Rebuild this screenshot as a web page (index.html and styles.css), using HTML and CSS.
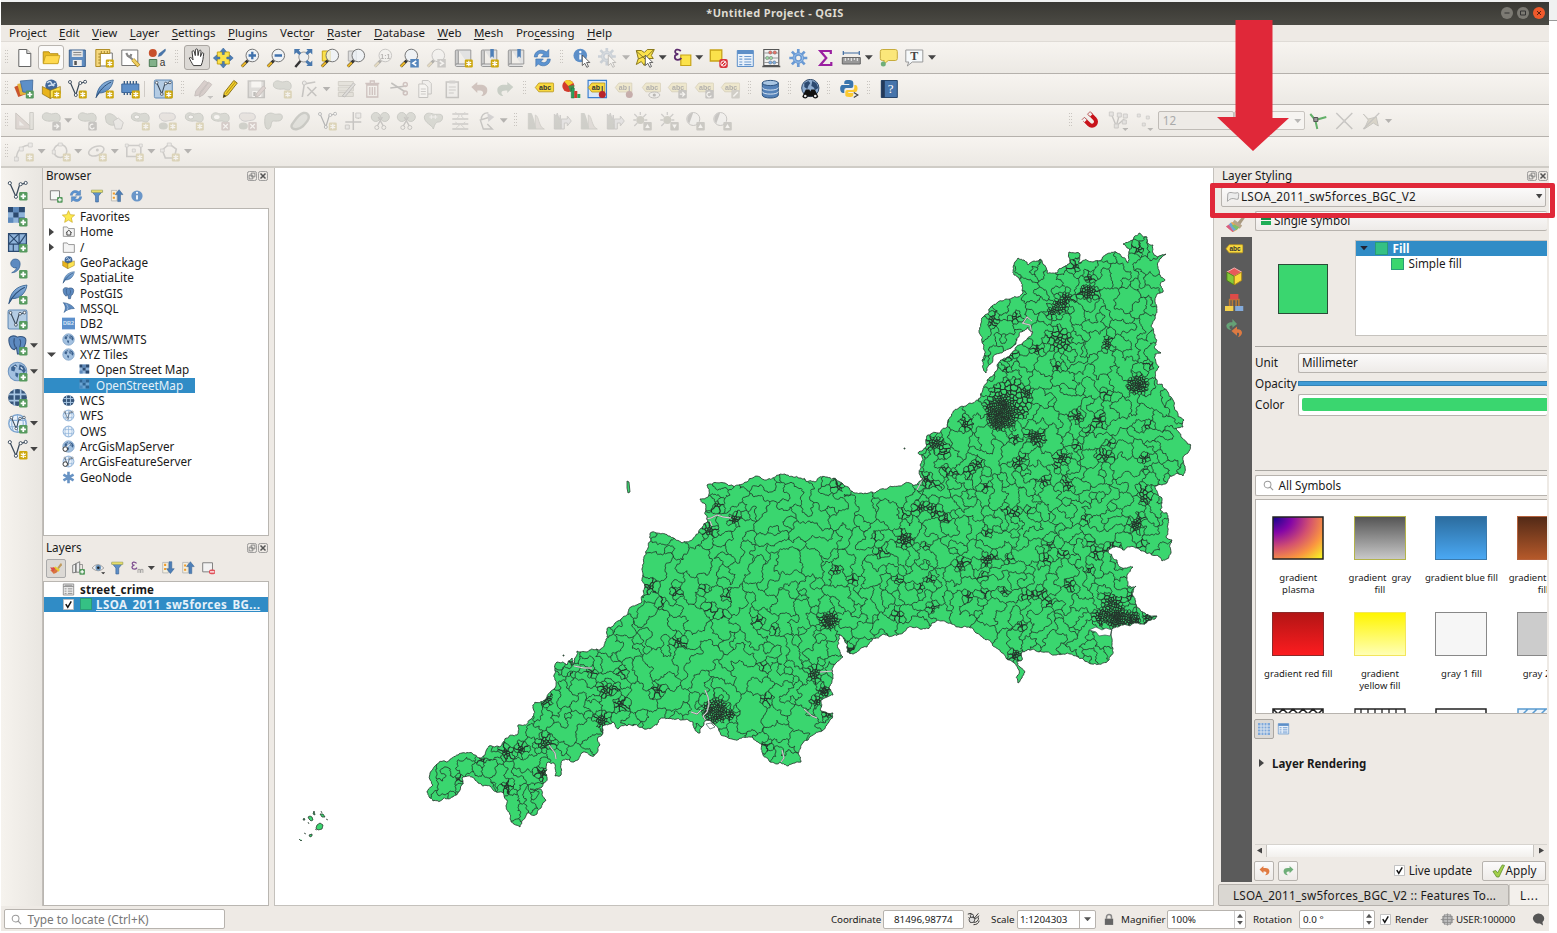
FILE: index.html
```html
<!DOCTYPE html>
<html lang="en">
<head>
<meta charset="utf-8">
<title>*Untitled Project - QGIS</title>
<link rel="stylesheet" href="styles.css">
</head>
<body>
<svg class="grads" width="0" height="0">
<linearGradient id="gb" x1="0" y1="0" x2="0" y2="1"><stop offset="0" stop-color="#8fb5dd"/><stop offset="1" stop-color="#4a7db8"/></linearGradient>
<radialGradient id="plasma" cx="0" cy="0" r="1.35"><stop offset="0" stop-color="#12058c"/><stop offset=".28" stop-color="#8405a7"/><stop offset=".55" stop-color="#d3516f"/><stop offset=".78" stop-color="#fa9540"/><stop offset="1" stop-color="#f6ee26"/></radialGradient>
</svg>
<svg class="defs" width="0" height="0">
<symbol id="star" viewBox="0 0 20 20"><rect x="11.500" y="11.500" width="8" height="8" rx="1.200" fill="#cda70d"/><path d="M15.500 12.800v5.400M13.100 14.100l4.800 2.800M17.900 14.100l-4.800 2.800" stroke="#fff" stroke-width="1.200"/></symbol>
<symbol id="plus" viewBox="0 0 20 20"><rect x="11.500" y="11.500" width="8" height="8" rx="1.200" fill="#569a5e"/><path d="M15.500 13v5M13 15.500h5" stroke="#fff" stroke-width="1.700"/></symbol>
<symbol id="new" viewBox="0 0 20 20"><path d="M4.500 1.500h8l4 4v13h-12z" fill="#fff" stroke="#666"/><path d="M12.500 1.500v4h4" fill="#ddd" stroke="#666"/></symbol>
<symbol id="open" viewBox="0 0 20 20"><path d="M1.500 16V4h6l1.500 2h8v10z" fill="#e8b923" stroke="#b58c14"/><path d="M1.500 16.500L4 8h15l-2 8.500z" fill="#ffd94e" stroke="#c09a1c" stroke-width=".8"/></symbol>
<symbol id="save" viewBox="0 0 20 20"><path d="M2 2h16v16.500H2z" fill="#5f8cc0" stroke="#3b5f8c"/><path d="M4.500 2.500h11v6.500h-11z" fill="#e6e6e6"/><path d="M6 4.500h8M6 6.800h8" stroke="#888"/><path d="M5.500 12h9v6h-9z" fill="#eee"/><path d="M7 13h2.500v4H7z" fill="#555"/></symbol>
<symbol id="layout" viewBox="0 0 20 20"><path d="M5 5h13v13H5z" fill="#fff" stroke="#777"/><path d="M1.500 1.500h14v4H6v13H1.500z" fill="#f5d77c" stroke="#a98418" stroke-width=".9"/><path d="M4 6h2M4 9h2M4 12h2M4 15h2M7 3v2M10 3v2M13 3v2" stroke="#907018" stroke-width=".8"/><use href="#star"/></symbol>
<symbol id="manager" viewBox="0 0 20 20"><path d="M1.500 2h16v15.500h-16z" fill="#fff" stroke="#777"/><path d="M6 5l1.500 3L10 9l1-3" fill="none" stroke="#888" stroke-width="2.200"/><path d="M8 8l5 4" stroke="#888" stroke-width="2.200"/><path d="M12.500 11.500l6 6.500" stroke="#a98418" stroke-width="4"/><path d="M12.500 11.500l5.700 6.200" stroke="#f0cf62" stroke-width="2.600"/></symbol>
<symbol id="stylem" viewBox="0 0 20 20"><circle cx="5.500" cy="5" r="4" fill="#c8512c"/><path d="M18 1l-6 4.500-1 3 3-1L18 3z" fill="#4876ad" stroke="#35608f" stroke-width=".5"/><path d="M2 11.500h7.500v7H2z" fill="#82b18a" stroke="#4d7a55"/><text x="12.500" y="18" font-family="Liberation Sans" font-size="10" fill="#333">a</text></symbol>
<symbol id="hand" viewBox="0 0 20 20"><path d="M6 18.500c-2-3-3.500-6-4.500-8 1.500-1.300 3 .5 4 2L4.500 4c.5-1.700 2-1.500 2.400 0l1 4L8 2c.6-1.500 2-1.400 2.400 0l.4 6 1-5c.8-1.300 2-1 2.100.4L13.400 9l1.400-3.500c1-1 2-.4 1.900.8-.5 3.500-.7 8-2.700 12.200z" fill="#fff" stroke="#333"/></symbol>
<symbol id="pansel" viewBox="0 0 20 20"><path d="M4 4h12v12H4z" fill="#fbe24b" stroke="#c7a418"/><path d="M10 0l3 3.500h-2v3H9v-3H7zM10 20l3-3.500h-2v-3H9v3H7zM0 10l3.500-3v2h3v2h-3v2zM20 10l-3.500-3v2h-3v2h3v2z" fill="#4d7fb8" stroke="#305c8e" stroke-width=".5"/></symbol>
<symbol id="lens" viewBox="0 0 20 20"><path d="M1.500 18.500l6-6" stroke="#333" stroke-width="3"/><path d="M1.500 18.500l4-4" stroke="#e8b528" stroke-width="2.300"/><circle cx="12" cy="7.500" r="6.300" fill="#eef3f8" fill-opacity=".75" stroke="#777"/></symbol>
<symbol id="zin" viewBox="0 0 20 20"><use href="#lens"/><path d="M12 3.800v7.400M8.300 7.500h7.400" stroke="#3f71ac" stroke-width="2.300"/></symbol>
<symbol id="zout" viewBox="0 0 20 20"><use href="#lens"/><path d="M8.300 7.500h7.400" stroke="#3f71ac" stroke-width="2.300"/></symbol>
<symbol id="zfull" viewBox="0 0 20 20"><path d="M2 19l6-7" stroke="#333" stroke-width="2.400"/><circle cx="10.500" cy="9" r="5" fill="#eee" stroke="#999"/><path d="M1 1h6L5.500 2.500l2.500 2.500-2 2-3-2.500L1 6.500zM19 1h-6l1.500 1.500L12 5l2 2 3-2.500 2 2zM19 18h-6l1.500-1.500L12 14l2-2 3 2.500 2-2z" fill="#4978ad"/></symbol>
<symbol id="zsel" viewBox="0 0 20 20"><path d="M2 3h8v10H2z" fill="#fbe24b" stroke="#c7a418"/><use href="#lens"/></symbol>
<symbol id="zlay" viewBox="0 0 20 20"><path d="M2 3h8v10H2z" fill="#ddd" stroke="#aaa"/><use href="#lens"/></symbol>
<symbol id="znat" viewBox="0 0 20 20"><use href="#lens"/><text x="7" y="10.500" font-family="Liberation Sans" font-weight="bold" font-size="7" fill="#444">1:1</text></symbol>
<symbol id="zlast" viewBox="0 0 20 20"><use href="#lens"/><path d="M11 11h8.500v8.500H11z" fill="#5585bb"/><path d="M17 13l-3.500 2.200L17 17.500" fill="none" stroke="#fff" stroke-width="1.500"/></symbol>
<symbol id="znext" viewBox="0 0 20 20"><use href="#lens"/><path d="M11 11h8.500v8.500H11z" fill="#888"/><path d="M13.500 13l3.500 2.200-3.500 2.300" fill="none" stroke="#fff" stroke-width="1.500"/></symbol>
<symbol id="book" viewBox="0 0 20 20"><path d="M2 3q0-1 1.500-1H5v14q-3-.5-3 1z" fill="#ccc" stroke="#999"/><path d="M5 2h12.500v14H4q-2 0-2 1.200t1.500 1.300h13" fill="#e2e2e2" stroke="#999"/></symbol>
<symbol id="bookn" viewBox="0 0 20 20"><use href="#book"/><use href="#star"/></symbol>
<symbol id="bookm" viewBox="0 0 20 20"><use href="#book"/><path d="M11 1h3.500v9l-1.700-1.700L11 10z" fill="#4d7fb8"/></symbol>
<symbol id="bookmn" viewBox="0 0 20 20"><use href="#bookm"/><use href="#star"/></symbol>
<symbol id="refresh" viewBox="0 0 20 20"><path d="M2 9C2 3 9 0 14 4l2.500-2.500V9H9l2.500-2.500C8 4 5 6 5 9zM18 11c0 6-7 9-12 5l-2.500 2.500V11H11l-2.500 2.500c3.500 2.500 6.500.5 6.500-2.500z" fill="#5d94d1" stroke="#3d6fa8" stroke-width=".6"/></symbol>
<symbol id="cursor" viewBox="0 0 20 20"><path d="M10 7v10.500l2.500-2.200 2 4 1.700-.8-1.900-4h3.200z" fill="#fff" stroke="#444" stroke-width=".8"/></symbol>
<symbol id="info" viewBox="0 0 20 20"><circle cx="8" cy="7.500" r="6.800" fill="#5d8fc8"/><path d="M8 6.500v5" stroke="#fff" stroke-width="2"/><circle cx="8" cy="4" r="1.200" fill="#fff"/><use href="#cursor"/></symbol>
<symbol id="gear" viewBox="0 0 20 20"><path d="M10 1v18M1 10h18M3.600 3.600l12.800 12.800M16.400 3.600L3.600 16.400" stroke="#6a9ad4" stroke-width="2.700"/><circle cx="10" cy="10" r="5.800" fill="#6a9ad4"/><circle cx="10" cy="10" r="4.300" fill="none" stroke="#9cc0e8"/><circle cx="10" cy="10" r="2.200" fill="#f3f0ec"/></symbol>
<symbol id="gearc" viewBox="0 0 20 20"><g transform="translate(-1.500 -1.500)"><use href="#gear"/></g><use href="#cursor"/></symbol>
<symbol id="sel" viewBox="0 0 20 20"><path d="M1 2.500h5l3 2 3-3h7l-3 6 2 3-6 0-3 7-3-4-5 3 2-6z" fill="#fbe24b" stroke="#8b7a1c"/><path d="M1 3l11 10M18 2l-9 9M3 11l7-3" stroke="#6b5f1c" stroke-width=".8"/><use href="#cursor"/></symbol>
<symbol id="eps" viewBox="0 0 20 20"><path d="M8.500 7h10v10.500h-10z" fill="#fbe24b" stroke="#c7a418" stroke-width="1.200"/><path d="M8.500 3C6 .5 2 1.500 3 4.500 3.500 6 6 6 6 6S2 6.500 2.500 9.500C3 12.500 7.500 12.500 9 10" fill="none" stroke="#5c2b6e" stroke-width="1.800"/></symbol>
<symbol id="desel" viewBox="0 0 20 20"><path d="M2 2h11.500v11H2z" fill="#fbe24b" stroke="#c7a418" stroke-width="1.300"/><rect x="11" y="11" width="8.500" height="9" rx="2" fill="#d9363e"/><circle cx="15.200" cy="15.500" r="2.600" fill="none" stroke="#fff"/><path d="M13.500 17.300l3.500-3.700" stroke="#fff"/></symbol>
<symbol id="table" viewBox="0 0 20 20"><path d="M2 2.500h16v16H2z" fill="#e9f1fa" stroke="#5d8fc8"/><path d="M2 2.500h16v3.500H2z" fill="#5d8fc8"/><path d="M4 8.500h3M9 8.500h7M4 11.200h3M9 11.200h7M4 14h3M9 14h7M4 16.600h3M9 16.600h7" stroke="#6d9bd0" stroke-width="1.200"/></symbol>
<symbol id="abacus" viewBox="0 0 20 20"><path d="M2.500 1.500h15v16h-15z" fill="#f2f2f2" stroke="#555" stroke-width="1.100"/><path d="M1 18.500h18" stroke="#555" stroke-width="1.300"/><path d="M3 5h14M3 10h14M3 14.500h14" stroke="#777" stroke-width=".7"/><g stroke="#666" stroke-width=".4"><circle cx="9" cy="4.500" r="1.700" fill="#e87468"/><circle cx="13.500" cy="4.500" r="1.700" fill="#e87468"/><circle cx="6" cy="10" r="1.700" fill="#9ad6a2"/><circle cx="9.700" cy="10" r="1.700" fill="#9ad6a2"/><circle cx="9" cy="14.500" r="1.700" fill="#7eade0"/><circle cx="13" cy="14.500" r="1.700" fill="#7eade0"/></g></symbol>
<symbol id="sigma" viewBox="0 0 20 20"><path d="M15.500 6V3H5l6 7-6 7h11V14" fill="none" stroke="#9a1fa0" stroke-width="2.200"/></symbol>
<symbol id="ruler" viewBox="0 0 20 20"><path d="M2 5h16M2 3v4M18 3v4" stroke="#3f6ba0" stroke-width="1.200"/><path d="M1 9.500h18v6.500H1z" fill="#999" stroke="#666"/><path d="M4 10v3M7 10v2M10 10v3M13 10v2M16 10v3" stroke="#eee"/></symbol>
<symbol id="tip" viewBox="0 0 20 20"><path d="M4 1.500h13q2 0 2 2v7q0 2-2 2h-7l-5 4 1-4H4q-2 0-2-2v-7q0-2 2-2z" fill="#fbe77a" stroke="#c7ac3c"/><circle cx="5" cy="16" r="2.500" fill="#6fae79"/></symbol>
<symbol id="textann" viewBox="0 0 20 20"><path d="M1.500 2h17v12H8l-5 4 1.500-4h-3z" fill="#f6f9fb" stroke="#999"/><text x="6" y="12" font-family="Liberation Serif" font-weight="bold" font-size="12" fill="#444">T</text></symbol>
<symbol id="addl" viewBox="0 0 20 20"><path d="M0 8l9-4 3 11-8 3z" fill="#c9542c"/><path d="M3 5l10-2 1 12-8 1z" fill="#e4b43a"/><path d="M6 2l12.500-1-.5 13-9.500-1z" fill="#5d8fc8" stroke="#3d6799" stroke-width=".8"/><use href="#plus"/></symbol>
<symbol id="gpkg" viewBox="0 0 20 20"><circle cx="10" cy="6.500" r="6" fill="#41689b"/><path d="M6 4q3-3 4 0t4 0M7 7q4-2 6 0" stroke="#cfe0f0" fill="none" stroke-width="1.500"/><path d="M1 7.500l8 4v8l-8-4.500z" fill="#e8b31c" stroke="#8e6f10" stroke-width=".7"/><path d="M9 11.500l10-4v7l-10 5z" fill="#fde453" stroke="#8e6f10" stroke-width=".7"/></symbol>
<symbol id="gpkgn" viewBox="0 0 20 20"><use href="#gpkg"/><use href="#star"/></symbol>
<symbol id="vect" viewBox="0 0 20 20"><path d="M3 3.500l5.500 12.500L12 4.500 18 3" fill="none" stroke="#3b4a5a" stroke-width="1.200"/><g fill="#fff" stroke="#3b4a5a" stroke-width=".9"><circle cx="2.700" cy="3" r="1.500"/><circle cx="8.500" cy="16" r="1.500"/><circle cx="13" cy="4" r="1.500"/><circle cx="17.800" cy="2.800" r="1.500"/></g></symbol>
<symbol id="vectn" viewBox="0 0 20 20"><use href="#vect"/><use href="#star"/></symbol>
<symbol id="vectp" viewBox="0 0 20 20"><use href="#vect"/><use href="#plus"/></symbol>
<symbol id="feather" viewBox="0 0 20 20"><path d="M2 18C3 9 8 2 19 1c-1 8-7 13-14 13z" fill="url(#gb)" stroke="#35608f" stroke-width=".8"/><path d="M1.500 19C5 12 10 6 17 3" fill="none" stroke="#2d4f77"/></symbol>
<symbol id="feathern" viewBox="0 0 20 20"><use href="#feather"/><use href="#star"/></symbol>
<symbol id="featherp" viewBox="0 0 20 20"><use href="#feather"/><use href="#plus"/></symbol>
<symbol id="chip" viewBox="0 0 20 20"><path d="M4 2v14M7 2v14M10 2v14M13 2v14M16 2v14" stroke="#31577f" stroke-width="1.300"/><path d="M1.500 5h17v8.500h-17z" fill="#5d8fc8" stroke="#3d6799"/><use href="#star"/></symbol>
<symbol id="virt" viewBox="0 0 20 20"><rect x="1" y="1" width="18" height="18" rx="1.500" fill="#b4cce4" stroke="#6089b5"/><g transform="translate(1 1) scale(.88)"><use href="#vect"/></g></symbol>
<symbol id="virtn" viewBox="0 0 20 20"><use href="#virt"/><use href="#star"/></symbol>
<symbol id="virtp" viewBox="0 0 20 20"><use href="#virt"/><use href="#plus"/></symbol>
<symbol id="pencil" viewBox="0 0 20 20"><path d="M4 18.500l1-5L14.500 1.500l3.500 2.500L8.500 16z" fill="#f3d02d" stroke="#8c7420"/><path d="M6.800 14.800L16 3" stroke="#b39010" fill="none"/><path d="M4 18.500l.6-3 2.300 1.500z" fill="#333"/></symbol>
<symbol id="pencils" viewBox="0 0 20 20"><path d="M1.500 17l1-5L11 1.500l4 2.500-9 12zM6 18l1-5 8-10 3.500 2.500-8 10z" fill="#b88" stroke="#866"/><path d="M14 17h6l-3 3z" fill="#777"/></symbol>
<symbol id="savep" viewBox="0 0 20 20"><path d="M2 2h16v16.500H2z" fill="#bbb" stroke="#777" stroke-width="1.500"/><path d="M5 2.500h10v6H5zM6 12h9v6H6z" fill="#fff"/><path d="M7 13h2.500v4H7z" fill="#666"/><path d="M9 18l1.500-4L17 7l2.500 2-7 8z" fill="#c99" stroke="#866"/></symbol>
<symbol id="poly" viewBox="0 0 20 20"><path d="M1 6C1 2 5 1 8 2.500s5-1 8 0 4 6 1.500 8-4-1-7-.5S1 10 1 6z" fill="#a4b19e" stroke="#7b8876"/></symbol>
<symbol id="polyn" viewBox="0 0 20 20"><use href="#poly"/><use href="#star"/></symbol>
<symbol id="polya" viewBox="0 0 20 20"><use href="#poly"/><rect x="11" y="11" width="8.500" height="8.500" rx="1" fill="#777"/><path d="M12.500 15.200h5M15 13l2.400 2.200L15 17.500" stroke="#fff" fill="none" stroke-width="1.200"/></symbol>
<symbol id="polyr" viewBox="0 0 20 20"><use href="#poly"/><rect x="11" y="11" width="8.500" height="8.500" rx="1" fill="#777"/><path d="M17 16.500a2.300 2.300 0 1 1-1-3" stroke="#fff" fill="none" stroke-width="1.200"/></symbol>
<symbol id="ring" viewBox="0 0 20 20"><use href="#poly"/><ellipse cx="6.500" cy="6" rx="2.800" ry="2" fill="#fff" stroke="#7b8876"/><use href="#star"/></symbol>
<symbol id="polyx" viewBox="0 0 20 20"><use href="#poly"/><ellipse cx="6.500" cy="6" rx="2.800" ry="2" fill="#fff"/><rect x="11" y="11" width="8.500" height="8.500" rx="1" fill="#b88"/><path d="M13 13l4.500 4.500M17.500 13L13 17.500" stroke="#fff" stroke-width="1.200"/></symbol>
<symbol id="poly2" viewBox="0 0 20 20"><path d="M2 5c1-4 4-3 8-3s8 0 8 4-5 3-8 4S2 9 2 5z" fill="#d9c9c4" stroke="#889"/><ellipse cx="6" cy="15" rx="4.500" ry="3.500" fill="#8f9d88"/><use href="#star"/></symbol>
<symbol id="poly2x" viewBox="0 0 20 20"><path d="M2 5c1-4 4-3 8-3s8 0 8 4-5 3-8 4S2 9 2 5z" fill="#d9c9c4" stroke="#889"/><ellipse cx="6" cy="15" rx="4.500" ry="3.500" fill="#8f9d88"/><rect x="11" y="11" width="8.500" height="8.500" rx="1" fill="#b88"/><path d="M13 13l4.500 4.500M17.500 13L13 17.500" stroke="#fff" stroke-width="1.200"/></symbol>
<symbol id="simp" viewBox="0 0 20 20"><path d="M1 6c1-4 5-4 8-2s5 4 3 8-8 2-10-1z" fill="#a4b19e" stroke="#7b8876"/><path d="M9 10l5-3 5 4.500-2 6.500H11z" fill="#ddd" stroke="#888"/></symbol>
<symbol id="resh" viewBox="0 0 20 20"><path d="M2 5c3-4 7-3 9-2s8-2 8 3-6 4-9 4-1 7-5 8-4-9-3-13z" fill="#a4b19e" stroke="#7b8876"/></symbol>
<symbol id="offs" viewBox="0 0 20 20"><path d="M2 13C5 9 8 3 13 2s7 4 4 8-5 7-10 8-7-2-5-5z" fill="#bfc8ba" stroke="#7c8878" stroke-width="2.400"/></symbol>
<symbol id="node" viewBox="0 0 20 20"><path d="M3 18L5 5 16 3M8 8l9 9M17 8l-9 9" stroke="#777" fill="none" stroke-width="1.600"/><circle cx="5" cy="4" r="2" fill="#ddd" stroke="#777"/></symbol>
<symbol id="form" viewBox="0 0 20 20"><path d="M2 2.500h15v4H2zM2 8h15v4H2zM2 13.500h15v4H2z" fill="#cdcab0" stroke="#99967c"/><path d="M6 17L17 4l2 1.500L8.500 18z" fill="#bbb" stroke="#666"/></symbol>
<symbol id="trash" viewBox="0 0 20 20"><path d="M4.500 6h11v12h-11zM3 4.500h14M8 4V2h4v2M7.500 8v8M10 8v8M12.500 8v8" fill="none" stroke="#a66" stroke-width="1.300"/></symbol>
<symbol id="cut" viewBox="0 0 20 20"><path d="M2 4l14 9M1 9l16-2" stroke="#666" stroke-width="1.500"/><circle cx="16" cy="5.500" r="2" fill="none" stroke="#a66" stroke-width="1.500"/><circle cx="16" cy="14" r="2" fill="none" stroke="#a66" stroke-width="1.500"/></symbol>
<symbol id="copy" viewBox="0 0 20 20"><path d="M7 1.500h6l3 3V15H7z" fill="#eee" stroke="#777"/><path d="M3.500 5h6l3 3v10.500h-9z" fill="#fff" stroke="#777"/><path d="M5.500 10h5M5.500 12.500h5M5.500 15h5" stroke="#888"/></symbol>
<symbol id="paste" viewBox="0 0 20 20"><path d="M4 3h12v15.500H4z" fill="#eee" stroke="#777" stroke-width="1.500"/><path d="M7 1.500h6v3H7z" fill="#999"/><path d="M6.500 8h7M6.500 11h7M6.500 14h5" stroke="#888"/></symbol>
<symbol id="undo" viewBox="0 0 20 20"><path d="M2 8l6-5v3c6-1 10 1 10 5s-3 6-6 6c4-4 1-6-4-5.500V14z" fill="#b0695a"/></symbol>
<symbol id="undoo" viewBox="0 0 20 20"><path d="M1 8l7-6v3.500c7-1 11 1 11 6s-4 7-8 7c5-4 2-7-3-6.500V15z" fill="#e07a41"/></symbol>
<symbol id="redo" viewBox="0 0 20 20"><path d="M18 8l-6-5v3C6 5 2 7 2 11s3 6 6 6c-4-4-1-6 4-5.500V14z" fill="#6d9a78"/></symbol>
<symbol id="redog" viewBox="0 0 20 20"><path d="M19 8l-7-6v3.500c-7-1-11 1-11 6s4 7 8 7c-5-4-2-7 3-6.500V15z" fill="#6fae79"/></symbol>
<symbol id="abc" viewBox="0 0 20 20"><path d="M1 8.500L4.500 4h14q.8 0 .8.800v7.200q0 .8-.8.800h-14z" fill="#f8d940" stroke="#b8941a" stroke-width=".8"/><text x="4.800" y="10.800" font-family="Liberation Sans" font-weight="bold" font-size="7" fill="#333">abc</text></symbol>
<symbol id="diag" viewBox="0 0 20 20"><circle cx="7" cy="7" r="6" fill="#d23a2c"/><path d="M7 7L3 2.500A6 6 0 0 1 12 4z" fill="#f3cf2b"/><path d="M7 7l6-1q0 5-4 7z" fill="#44904d"/><path d="M10 9h3v10h-3z" fill="#2ca05a" stroke="#1c6638" stroke-width=".5"/><path d="M13 12h3v7h-3z" fill="#d23a2c"/><path d="M16 15h3v4h-3z" fill="#2ca05a"/></symbol>
<symbol id="pinl" viewBox="0 0 20 20"><path d="M1 8.500L4.500 4h13v9h-13z" fill="#f8d940" stroke="#b8941a" stroke-width=".8"/><text x="4.500" y="11" font-family="Liberation Sans" font-weight="bold" font-size="7" fill="#333">ab</text><path d="M15 7v7" stroke="#555" stroke-width="1.300"/><circle cx="15" cy="15.500" r="3.500" fill="#b8242b"/></symbol>
<symbol id="pinb" viewBox="0 0 20 20"><path d="M.8 1.300h18.400v17.400H.8z" fill="#dbe8f6" stroke="#3b7fd0" stroke-width="1.200"/><use href="#pinl"/></symbol>
<symbol id="eyel" viewBox="0 0 20 20"><use href="#abc"/><ellipse cx="13" cy="16" rx="5.500" ry="3" fill="#eee" stroke="#666"/><circle cx="13" cy="16" r="1.600" fill="#555"/></symbol>
<symbol id="mvl" viewBox="0 0 20 20"><use href="#abc"/><rect x="11" y="11" width="8.500" height="8.500" rx="1" fill="#777"/><path d="M12.500 15.200h5M15 13l2.400 2.200L15 17.500" stroke="#fff" fill="none" stroke-width="1.200"/></symbol>
<symbol id="rtl" viewBox="0 0 20 20"><use href="#abc"/><rect x="11" y="11" width="8.500" height="8.500" rx="1" fill="#777"/><path d="M17 16.500a2.300 2.300 0 1 1-1-3" stroke="#fff" fill="none" stroke-width="1.200"/></symbol>
<symbol id="edl" viewBox="0 0 20 20"><use href="#abc"/><rect x="11" y="11" width="8.500" height="8.500" rx="1" fill="#99967c"/><path d="M13 17.500l4.500-4.500" stroke="#fff" fill="none" stroke-width="1.600"/></symbol>
<symbol id="db" viewBox="0 0 20 20"><path d="M2 4v12c0 4 16 4 16 0V4z" fill="#5582b8" stroke="#2f5580"/><path d="M2 8.500c0 3.500 16 3.500 16 0M2 12.500c0 3.500 16 3.500 16 0" fill="none" stroke="#d6e3f0"/><ellipse cx="10" cy="4" rx="8" ry="2.600" fill="#a9c6e3" stroke="#2f5580"/></symbol>
<symbol id="globe" viewBox="0 0 20 20"><circle cx="10" cy="10" r="8.800" fill="#a3c1e0" stroke="#7096c0"/><path d="M4 6l4-3 2 2-2 2-1 3-3-1zM12 3l4 2 2 4-2 3-2-3-3-1zM8 11l3 1-1 4-2-2z" fill="#3c628f"/><path d="M7 5l2 1M13 6l2 2" stroke="#dde8f3" stroke-width="1.200"/></symbol>
<symbol id="globep" viewBox="0 0 20 20"><use href="#globe"/><use href="#plus"/></symbol>
<symbol id="gfind" viewBox="0 0 20 20"><circle cx="10" cy="9" r="8.600" fill="#8fadd0" stroke="#2f4a6c"/><path d="M4 4l4-2 2 2-2 3-1 3-3-2zM12 2l4 2 2 5-3 2-2-3-2-1z" fill="#2d4a70"/><path d="M5.500 10.500H9l1 2 1-2h3.500l3.500 7c-1 2.500-5 2.500-5.500 0h-5C7 20 3 20 2 17.500z" fill="#111"/><circle cx="5" cy="17" r="1.300" fill="#eee"/><circle cx="15" cy="17" r="1.300" fill="#eee"/></symbol>
<symbol id="py" viewBox="0 0 20 20"><path d="M9 1c-4 0-4 1-4 4h5v1H3c-3 0-3 8 1 8h1v-3q0-2 2-2h5q2 0 2-2V4c0-2-1-3-5-3z" fill="#3a75ad"/><path d="M10 18c4 0 4-1 4-4H9v-1h7c3 0 3-7 0-7h-1v3q0 2-2 2H8q-2 0-2 2v3c0 1 1 2 4 2z" fill="#fbc931"/><path d="M14.500 13.500l4 2.500-4 2.500" fill="none" stroke="#444" stroke-width="1.200"/></symbol>
<symbol id="help" viewBox="0 0 20 20"><path d="M2 1.500h16v17H2z" fill="#4674ab" stroke="#27466c"/><path d="M2 1.500h3.500v17H2z" fill="#23395a"/><text x="8.500" y="14" font-family="Liberation Serif" font-size="13" fill="#fff">?</text></symbol>
<symbol id="cad" viewBox="0 0 20 20"><path d="M1.500 2v16H19z" fill="#c9a9a0" stroke="#876"/><path d="M5 10v4.500h5z" fill="#eee"/><path d="M15.500 1.500h3.500v17h-3.500z" fill="#ccb" stroke="#887"/></symbol>
<symbol id="scis" viewBox="0 0 20 20"><circle cx="5.500" cy="6" r="4.500" fill="#a4b19e" stroke="#7b8876"/><circle cx="14.500" cy="6" r="4.500" fill="#a4b19e" stroke="#7b8876"/><path d="M8 6l5 9M12 6l-5 9" stroke="#777" stroke-width="1.500"/><circle cx="6.500" cy="16.500" r="2" fill="none" stroke="#777"/><circle cx="13.500" cy="16.500" r="2" fill="none" stroke="#777"/></symbol>
<symbol id="mrg" viewBox="0 0 20 20"><path d="M1 6c1-5 6-4 9-3s8-1 9 2-1 6-4 6-4 4-5 7c-1-4-9-6-9-12z" fill="#a4b19e" stroke="#7b8876"/><path d="M6 6h8M8 4v4M12 4v4" stroke="#eee"/></symbol>
<symbol id="merge" viewBox="0 0 20 20"><path d="M2 3h16M2 8h16M2 13h16M2 18h16" stroke="#888" stroke-width="1.500"/><path d="M5 1l4 4-4 4M15 1l-4 4 4 4M5 11l4 3-4 4M15 11l-4 3 4 4" fill="none" stroke="#999"/></symbol>
<symbol id="mergev" viewBox="0 0 20 20"><path d="M10 1v18M2 11h16M15 2v6" stroke="#777" stroke-width="1.500"/><path d="M12.500 2h5v5h-5zM2 14h4v4H2z" fill="#ddd" stroke="#888"/></symbol>
<symbol id="rot" viewBox="0 0 20 20"><path d="M14 6L4 9l3 9h9l-5-5M5 9a6 6 0 0 1 7-7" fill="none" stroke="#777" stroke-width="1.400"/><path d="M11 2l7 4-6 5z" fill="#99a"/></symbol>
<symbol id="hist" viewBox="0 0 20 20"><path d="M2 2v16h16c-6-2-5-13-9-14v14" fill="#c9b9b4" stroke="#998"/><path d="M2 2h3c2 2 4 12 5 16H2z" fill="#8d9788"/></symbol>
<symbol id="histx" viewBox="0 0 20 20"><path d="M2 18V3l2 2 1-3 2 7 1-5 1 14z" fill="#8d9788" stroke="#888"/><path d="M9 8h6V5l4 5-4 5v-3h-3v6H9z" fill="#ccd" stroke="#888"/></symbol>
<symbol id="sun" viewBox="0 0 20 20"><circle cx="8" cy="9" r="4" fill="#8f8f70"/><path d="M8 1v3M1 9h3M2 3l3 3M14 3l-3 3M2 15l3-3M12 9h3" stroke="#888" stroke-width="1.300"/><rect x="11" y="11" width="8.500" height="8.500" rx="1" fill="#88887a"/><path d="M15.200 13l2.300 4h-4.600z" fill="#fff"/></symbol>
<symbol id="sund" viewBox="0 0 20 20"><use href="#sun"/><path d="M12.500 12.500h5.500v5h-5.500z" fill="#88887a"/><path d="M15.200 17.500l2.300-4h-4.600z" fill="#fff"/></symbol>
<symbol id="contr" viewBox="0 0 20 20"><circle cx="8" cy="8" r="6.500" fill="#eee" stroke="#777"/><path d="M8 1.500a6.500 6.500 0 0 0-4 11z" fill="#777"/><rect x="11" y="11" width="8.500" height="8.500" rx="1" fill="#88887a"/><path d="M15.200 13l2.300 4h-4.600z" fill="#fff"/></symbol>
<symbol id="magnet" viewBox="0 0 20 20"><g transform="rotate(-45 10 10)"><path d="M6 4v7a4 4 0 0 0 8 0V4" fill="none" stroke="#c8141c" stroke-width="4"/><path d="M6 3v3M14 3v3" stroke="#eee" stroke-width="3.400"/><path d="M4.200 2.500h3.600v3.500M12.200 6V2.500h3.600V6" fill="none" stroke="#a33" stroke-width=".7"/></g></symbol>
<symbol id="snapv" viewBox="0 0 20 20"><path d="M3 3l5 12 3-11M8 15l8-7" stroke="#777" fill="none" stroke-width="1.400"/><path d="M1 1h4v4H1zM6 13h4v4H6zM9 2h4v4H9zM15 3h4v4h-4zM14 9h4v4h-4z" fill="#ccc" stroke="#888"/><path d="M14 17h6l-3 3z" fill="#555"/></symbol>
<symbol id="dots" viewBox="0 0 20 20"><path d="M3 3h3v3H3zM12 5h3v3h-3zM8 12h3v3H8z" fill="#ccc" stroke="#888" stroke-width=".8"/><path d="M13 17h6l-3 3z" fill="#555"/></symbol>
<symbol id="topo" viewBox="0 0 20 20"><path d="M2 3l5 6 11-3M7 9l2 9" stroke="#63b069" fill="none" stroke-width="2"/><path d="M5.500 6.500h4v4h-4z" fill="#999" stroke="#555"/></symbol>
<symbol id="xx" viewBox="0 0 20 20"><path d="M2 2l16 16M18 2L2 18" stroke="#777" stroke-width="1.500"/><circle cx="10" cy="10" r="1.500" fill="#888"/></symbol>
<symbol id="xs" viewBox="0 0 20 20"><path d="M2 3l5 5 8-2 2 9-5-3-9 6 4-9z" fill="#b5a66c" stroke="#776"/><path d="M18 2L2 18" stroke="#777" stroke-width="1.300"/></symbol>
<symbol id="arcn" viewBox="0 0 20 20"><path d="M2 18C2 9 7 3 17 3" fill="none" stroke="#888" stroke-width="1.600"/><path d="M0 15h4v4H0zM5 5h4v4H5zM14 1h4v4h-4z" fill="#ddd" stroke="#888" stroke-width=".8"/><use href="#star"/></symbol>
<symbol id="circn" viewBox="0 0 20 20"><circle cx="9" cy="9" r="6.500" fill="none" stroke="#888" stroke-width="1.600"/><path d="M7 1h4v3H7zM1 8h3v4H1z" fill="#ddd" stroke="#888" stroke-width=".8"/><use href="#star"/></symbol>
<symbol id="elln" viewBox="0 0 20 20"><ellipse cx="9" cy="9" rx="8" ry="4.500" transform="rotate(-20 9 9)" fill="none" stroke="#888" stroke-width="1.600"/><circle cx="10" cy="8" r="1.500" fill="#888"/><use href="#star"/></symbol>
<symbol id="recn" viewBox="0 0 20 20"><path d="M2.500 3.500h14v11h-14z" fill="none" stroke="#888" stroke-width="1.600"/><path d="M8 7h3v3H8zM1 2h3v3H1zM15 2h3v3h-3z" fill="#ddd" stroke="#888" stroke-width=".8"/><use href="#star"/></symbol>
<symbol id="pentn" viewBox="0 0 20 20"><path d="M9 2l7 5-2 9H5L2 8z" fill="none" stroke="#888" stroke-width="1.600"/><path d="M7 1h4v3H7zM0 7h4v3H0z" fill="#ddd" stroke="#888" stroke-width=".8"/><use href="#star"/></symbol>
<symbol id="raster" viewBox="0 0 20 20"><path d="M1 1h16v15H1z" fill="#8fb3da"/><path d="M1 1h5v5H1zM11 1h6v5h-6zM6 6h5v5H6zM11 11h6v5h-6z" fill="#2c4a70"/><path d="M6 1h5v5H6zM1 11h5v5H1z" fill="#5c88ba"/></symbol>
<symbol id="rasterp" viewBox="0 0 20 20"><use href="#raster"/><use href="#plus"/></symbol>
<symbol id="meshp" viewBox="0 0 20 20"><path d="M1.500 1.500h17v17h-17z" fill="#8fb3da" stroke="#2c4a70" stroke-width="1.200"/><path d="M1.500 1.500l10 10M11.500 1.500l-10 10M11.500 1.500v17M11.500 11.500l7-10M1.500 11.500h17M6 11.500v7" fill="none" stroke="#2c4a70" stroke-width="1.100"/><use href="#plus"/></symbol>
<symbol id="commap" viewBox="0 0 20 20"><path d="M8 1a4.200 4.200 0 1 0 1 8.200C8.500 11.500 6.500 13 4.500 14c5 0 8-4 8-8.500C12.500 2.500 10.500 1 8 1z" fill="#5d8ac0" stroke="#35608f" stroke-width=".7"/><use href="#plus"/></symbol>
<symbol id="pg" viewBox="0 0 20 20"><path d="M2 3c2-3 6-2 8-1 2-1 8-1 8 3s-2 8-4 8l-1 5h-3l-1-6-2 2C4 14 1 8 2 3z" fill="#5d8ac0" stroke="#35557f"/><path d="M7 3c-1 4 0 7 1 9M12 4c2 2 1 5 0 8" fill="none" stroke="#35557f"/></symbol>
<symbol id="pgp" viewBox="0 0 20 20"><use href="#pg"/><use href="#plus"/></symbol>
<symbol id="wcs" viewBox="0 0 20 20"><ellipse cx="10" cy="10" rx="9" ry="8" fill="#36557a"/><path d="M2 7h16M2 13h16M7 2v16M13 2v16" stroke="#a8c5e2" stroke-width="1.500"/></symbol>
<symbol id="wcsp" viewBox="0 0 20 20"><use href="#wcs"/><use href="#plus"/></symbol>
<symbol id="grid" viewBox="0 0 20 20"><circle cx="10" cy="10" r="8.300" fill="#eaf2fa" stroke="#7ba4d0" stroke-width="1.300"/><path d="M2 7h16M2 13h16M10 2v16M6 3q-3 7 0 14M14 3q3 7 0 14" fill="none" stroke="#8fb3da"/></symbol>
<symbol id="wfs" viewBox="0 0 20 20"><use href="#grid"/><g transform="translate(2 2) scale(.8)"><use href="#vect"/></g></symbol>
<symbol id="wfsp" viewBox="0 0 20 20"><use href="#wfs"/><use href="#plus"/></symbol>
<symbol id="favs" viewBox="0 0 20 20"><path d="M10 1l2.700 6.200 6.800.6-5.100 4.500 1.500 6.700-5.900-3.500L4.100 19l1.500-6.700L.5 7.800l6.800-.6z" fill="#fce94f" stroke="#c9a51c"/></symbol>
<symbol id="folder" viewBox="0 0 20 20"><path d="M2 17.500V3h6l2 2.500h9v12z" fill="#f4f4f4" stroke="#888" stroke-width="1.300"/></symbol>
<symbol id="homef" viewBox="0 0 20 20"><use href="#folder"/><path d="M6 12l4.500-4 4.500 4M7.500 11v4.500h6V11" fill="none" stroke="#444" stroke-width="1.500"/></symbol>
<symbol id="mssql" viewBox="0 0 20 20"><path d="M2 1c8 1 14 4 17 9-6 0-12 2-16 6 3-5 3-10-1-15z" fill="#5d8ac0" stroke="#35608f"/><path d="M7 3q4 6 1 10" fill="none" stroke="#b5cde6"/></symbol>
<symbol id="db2" viewBox="0 0 20 20"><path d="M0 1h20v18H0z" fill="#5d90cc"/><text x="1.500" y="13" font-family="Liberation Sans" font-weight="bold" font-size="8.500" fill="#d6e6f5">DB2</text></symbol>
<symbol id="arcg" viewBox="0 0 20 20"><use href="#globe"/><circle cx="5" cy="14" r="3.500" fill="#fff" stroke="#333" stroke-width="1.500"/><path d="M7 11l6-5" stroke="#eee" stroke-width="1.500"/></symbol>
<symbol id="arcf" viewBox="0 0 20 20"><use href="#wfs"/><circle cx="5" cy="14" r="3.500" fill="#fff" stroke="#333" stroke-width="1.500"/></symbol>
<symbol id="geon" viewBox="0 0 20 20"><path d="M10 1v18M2.200 5.500l15.600 9M17.800 5.500l-15.600 9" stroke="#6893c4" stroke-width="4"/><circle cx="10" cy="10" r="3.500" fill="#6893c4"/></symbol>
<symbol id="addsel" viewBox="0 0 20 20"><path d="M2 2.500h13v13H2z" fill="#f6f6f6" stroke="#777" stroke-width="1.300"/><use href="#plus"/></symbol>
<symbol id="funnel" viewBox="0 0 20 20"><path d="M2 3h16l-6 7v8.500H8V10z" fill="#5d8fc8" stroke="#3d6799"/><path d="M2 1.500h16v3.500H2z" fill="#e6dc6a" stroke="#8f9a5a" stroke-width=".7"/></symbol>
<symbol id="collapse" viewBox="0 0 20 20"><path d="M2 2h8v15H2z" fill="#f4f0e0" stroke="#aaa"/><path d="M4 5h3v3H4zM4 11h3v3H4z" fill="#f09a2a"/><path d="M13 1l5.500 7H15v10h-4V8H7.500z" fill="#4d7fb8" stroke="#305c8e" stroke-width=".7"/></symbol>
<symbol id="expand" viewBox="0 0 20 20"><path d="M2 2h8v15H2z" fill="#f4f0e0" stroke="#aaa"/><path d="M4 4h3v3H4zM4 10h3v3H4z" fill="#f09a2a"/><path d="M13 18l5.500-7H15V1h-4v10H7.500z" fill="#4d7fb8" stroke="#305c8e" stroke-width=".7"/></symbol>
<symbol id="infoc" viewBox="0 0 20 20"><circle cx="10" cy="10" r="8" fill="#6a96c8"/><path d="M10 9v6" stroke="#fff" stroke-width="2.500"/><circle cx="10" cy="5.500" r="1.500" fill="#fff"/></symbol>
<symbol id="brush" viewBox="0 0 20 20"><path d="M12 9l5-7q3 0 2 3l-5 6z" fill="#c09a5c"/><path d="M9 7l7 5-2 3-8-6z" fill="#e8d02f"/><path d="M6 8l7 6c-2 3-4 4-7 4-1-2-3-4-5-5 3-1 4-3 5-5z" fill="#d9743f"/><path d="M1 8q3 1 5 0l3 2-4 5z" fill="#d84b4b"/></symbol>
<symbol id="brush2" viewBox="0 0 20 20"><path d="M12 8l6-7q2 0 2 2l-5 7z" fill="#a99a80"/><path d="M9 5l8 6-2.500 3.500-8-6z" fill="#b5a48a"/><path d="M6 7l8 6c-2 3-4 4-7 5L0 12c3-1 5-2 6-5z" fill="#e8a94f"/><path d="M0 12l3-2 5 7-1 1z" fill="#d95c86"/><path d="M3 10l2-2 6 7-3 2z" fill="#6ea4d8"/><path d="M9 10l5 3-3 3-5-5z" fill="#7cbf6a"/></symbol>
<symbol id="addgrp" viewBox="0 0 20 20"><path d="M2 6l5-2v12l-5 1zM6 4l6-3v15H6z" fill="#eee" stroke="#777" stroke-width="1.300"/><path d="M12 5h4v10" fill="none" stroke="#777"/><use href="#plus"/></symbol>
<symbol id="eye" viewBox="0 0 20 20"><path d="M1 10q8-10 17 0-8 8-17 0z" fill="#f2f2f2" stroke="#999" stroke-width="1.300"/><circle cx="10" cy="9.500" r="4" fill="#6f97bd"/><circle cx="10" cy="9.500" r="1.800" fill="#222"/><path d="M14 16h6l-3 3z" fill="#333"/></symbol>
<symbol id="epsf" viewBox="0 0 20 20"><path d="M9 3.500C6 0 2 1.500 3 4.500 3.500 6 6 6 6 6S2 6.500 2.500 9.500C3 12.500 8 12.500 9.500 9.500" fill="none" stroke="#7c4b8e" stroke-width="1.800"/><path d="M11 17v-5h3v5M15 17v-5h3v5" fill="none" stroke="#888"/></symbol>
<symbol id="remove" viewBox="0 0 20 20"><path d="M2 2.500h14v13H2z" fill="#f2f2f2" stroke="#777" stroke-width="1.300"/><rect x="11" y="12" width="9" height="7" rx="3" fill="#e0525a"/><path d="M12.500 15.500h6" stroke="#fff" stroke-width="1.600"/></symbol>
<symbol id="tbl" viewBox="0 0 20 20"><path d="M2 1.500h16v17H2z" fill="#eee" stroke="#888" stroke-width="1.300"/><path d="M2 5.500h16M4 9h3M9 9h7M4 12.500h3M9 12.500h7M4 16h3M9 16h7M4 3.500h12" stroke="#888" stroke-width="1.400"/></symbol>
<symbol id="fl" viewBox="0 0 12 12"><rect x=".5" y=".5" width="11" height="11" rx="2.500" fill="none" stroke="#888"/><path d="M5 2.500h4.500V7H5zM2.500 5H7v4.500H2.500z" fill="#f0ede8" stroke="#777"/></symbol>
<symbol id="cl" viewBox="0 0 12 12"><rect x=".5" y=".5" width="11" height="11" rx="2.500" fill="none" stroke="#888"/><path d="M3 3l6 6M9 3L3 9" stroke="#555" stroke-width="1.800"/></symbol>
<symbol id="cube" viewBox="0 0 20 20"><path d="M10 1l8 4.500L10 10 2 5.500z" fill="#e85a5a" stroke="#fbb"/><path d="M2 5.500l8 4.500v9.500l-8-5z" fill="#86c93a" stroke="#4b7a17"/><path d="M18 5.500L10 10v9.500l8-5z" fill="#fbd93a" stroke="#a6821a"/></symbol>
<symbol id="tree" viewBox="0 0 20 20"><path d="M8 5v9M12 5v9M5 15V7h10v8" fill="none" stroke="#b97a35" stroke-width="1.700"/><path d="M5.500 1h9v6h-9z" fill="#dd4b48"/><path d="M0 14h9v6H0z" fill="#f4d04c"/><path d="M11 14h9v6h-9z" fill="#84abdb"/></symbol>
<symbol id="undoredo" viewBox="0 0 20 20"><path d="M8 0l5 5.500-5 4V7C4 7 4 9 7 12 0 12-1 3 8 3.500z" fill="#65a176"/><path d="M7 13l6-5v3c7-.5 7 7 1 8.500 2-3 1.500-5-1-4.500v3z" fill="#dd7a42"/></symbol>
<symbol id="flag" viewBox="0 0 16 14"><path d="M1.500 12L2 3c3-3 7 .5 11-1 2-.5 2 2 1 7.500-2 1-5-1.500-8-.5s-2.500 2-4.500 3z" fill="#ececec" stroke="#999"/></symbol>
<symbol id="mag" viewBox="0 0 12 12"><circle cx="5" cy="5" r="3.700" fill="none" stroke="#999" stroke-width="1.100"/><path d="M7.800 7.800L11 11" stroke="#999" stroke-width="1.300"/></symbol>
<symbol id="chk" viewBox="0 0 12 12"><path d="M.5.500h11v11H.5z" fill="#fff" stroke="#bbb"/><path d="M3 5.500l2.200 3.500L9 2.500" fill="none" stroke="#111" stroke-width="1.600"/></symbol>
<symbol id="lock" viewBox="0 0 12 14"><path d="M3 6V4a3 3 0 0 1 6 0v2" fill="none" stroke="#888" stroke-width="1.800"/><path d="M1 6h10v7.500H1z" fill="#666"/></symbol>
<symbol id="sat" viewBox="0 0 16 16"><path d="M1 2l4-1 5 7M2 6l6 6M14 1L4 13M15 4l-5 4M8 12a5 5 0 0 0 6-6M8 15q6 0 7-5" stroke="#333" stroke-width="1.200" fill="none"/><circle cx="6" cy="9" r="3.500" fill="#ddd" stroke="#333"/><circle cx="6" cy="4" r="2" fill="#ddd" stroke="#333"/></symbol>
<symbol id="wire" viewBox="0 0 20 20"><circle cx="10" cy="10" r="7" fill="#bbb" stroke="#999"/><path d="M1 10h18M3 6h14M3 14h14M10 2v16M6 3q-3 7 0 14M14 3q3 7 0 14" fill="none" stroke="#888"/></symbol>
</svg>

<div class="window">
  <header class="titlebar"><span>*Untitled Project - QGIS</span><div class="wbtns"><svg viewBox="0 0 12 12"><circle cx="6" cy="6" r="6" fill="#7c7a73"/><path d="M3.500 6h5" stroke="#333"/></svg><svg viewBox="0 0 12 12"><circle cx="6" cy="6" r="6" fill="#7c7a73"/><path d="M3.500 4h5v4h-5z" fill="none" stroke="#333"/></svg><svg viewBox="0 0 12 12"><circle cx="6" cy="6" r="6" fill="#f0592b"/><path d="M4 4l4 4M8 4L4 8" stroke="#5c2210"/></svg></div></header>
  <nav class="menu"><a>Pro<u>j</u>ect</a><a><u>E</u>dit</a><a><u>V</u>iew</a><a><u>L</u>ayer</a><a><u>S</u>ettings</a><a><u>P</u>lugins</a><a>Vect<u>o</u>r</a><a><u>R</u>aster</a><a><u>D</u>atabase</a><a><u>W</u>eb</a><a><u>M</u>esh</a><a>Pro<u>c</u>essing</a><a><u>H</u>elp</a></nav>
  <div class="bar"><b class="g"></b>
    <svg><use href="#new"/></svg><svg class="btn"><use href="#open"/></svg><svg><use href="#save"/></svg><svg><use href="#layout"/></svg><svg><use href="#manager"/></svg><svg><use href="#stylem"/></svg><b class="g"></b>
    <svg class="btn on"><use href="#hand"/></svg><svg><use href="#pansel"/></svg><svg><use href="#zin"/></svg><svg><use href="#zout"/></svg><svg><use href="#zfull"/></svg><svg><use href="#zsel"/></svg><svg><use href="#zlay"/></svg><svg class="off"><use href="#znat"/></svg><svg><use href="#zlast"/></svg><svg class="off"><use href="#znext"/></svg><svg><use href="#bookn"/></svg><svg><use href="#bookmn"/></svg><svg><use href="#bookm"/></svg><svg><use href="#refresh"/></svg><b class="g"></b>
    <svg><use href="#info"/></svg><svg class="off"><use href="#gearc"/></svg><b class="d off"></b><svg><use href="#sel"/></svg><b class="d"></b><svg><use href="#eps"/></svg><b class="d"></b><svg><use href="#desel"/></svg><svg><use href="#table"/></svg><svg><use href="#abacus"/></svg><svg><use href="#gear"/></svg><svg><use href="#sigma"/></svg><svg><use href="#ruler"/></svg><b class="d"></b><svg><use href="#tip"/></svg><svg><use href="#textann"/></svg><b class="d"></b>
  </div>
  <div class="bar"><b class="g"></b>
    <svg><use href="#addl"/></svg><svg><use href="#gpkgn"/></svg><svg><use href="#vectn"/></svg><svg><use href="#feathern"/></svg><svg><use href="#chip"/></svg><b class="s"></b><svg><use href="#virtn"/></svg><b class="g"></b>
    <svg class="off"><use href="#pencils"/></svg><svg><use href="#pencil"/></svg><svg class="off"><use href="#savep"/></svg><svg class="off"><use href="#polyn"/></svg><svg class="off"><use href="#node"/></svg><b class="d off"></b><svg class="off"><use href="#form"/></svg><svg class="off"><use href="#trash"/></svg><svg class="off"><use href="#cut"/></svg><svg class="off"><use href="#copy"/></svg><svg class="off"><use href="#paste"/></svg><svg class="off"><use href="#undo"/></svg><svg class="off"><use href="#redo"/></svg><b class="g narrow"></b>
    <svg><use href="#abc"/></svg><svg><use href="#diag"/></svg><svg><use href="#pinb"/></svg><svg class="off"><use href="#pinl"/></svg><svg class="off"><use href="#eyel"/></svg><svg class="off"><use href="#mvl"/></svg><svg class="off"><use href="#rtl"/></svg><svg class="off"><use href="#edl"/></svg><b class="g"></b><svg><use href="#db"/></svg><b class="g"></b><svg><use href="#gfind"/></svg><b class="g"></b><svg><use href="#py"/></svg><b class="g"></b><svg><use href="#help"/></svg>
  </div>
  <div class="bar"><b class="g"></b>
    <svg class="off"><use href="#cad"/></svg><svg class="off"><use href="#polya"/></svg><b class="d off"></b><svg class="off"><use href="#polyr"/></svg><svg class="off"><use href="#simp"/></svg><svg class="off"><use href="#ring"/></svg><svg class="off"><use href="#poly2"/></svg><svg class="off"><use href="#ring"/></svg><svg class="off"><use href="#polyx"/></svg><svg class="off"><use href="#poly2x"/></svg><svg class="off"><use href="#resh"/></svg><svg class="off"><use href="#offs"/></svg><svg class="off"><use href="#vectn"/></svg><svg class="off"><use href="#mergev"/></svg><svg class="off"><use href="#scis"/></svg><svg class="off"><use href="#scis"/></svg><svg class="off"><use href="#mrg"/></svg><svg class="off"><use href="#merge"/></svg><svg class="off"><use href="#rot"/></svg><b class="d off"></b><b class="g"></b>
    <svg class="off"><use href="#hist"/></svg><svg class="off"><use href="#histx"/></svg><svg class="off"><use href="#hist"/></svg><svg class="off"><use href="#histx"/></svg><svg class="off"><use href="#sun"/></svg><svg class="off"><use href="#sund"/></svg><svg class="off"><use href="#contr"/></svg><svg class="off"><use href="#contr"/></svg>
    <div class="snap"><b class="g"></b><svg><use href="#magnet"/></svg><svg class="off"><use href="#snapv"/></svg><svg class="off"><use href="#dots"/></svg><span class="spin12">12</span><span class="unitbox"><b class="d off"></b></span><svg><use href="#topo"/></svg><svg class="off"><use href="#xx"/></svg><svg class="off"><use href="#xs"/></svg><b class="d off"></b></div>
  </div>
  <div class="bar last"><b class="g"></b><svg class="off"><use href="#arcn"/></svg><b class="d off"></b><svg class="off"><use href="#circn"/></svg><b class="d off"></b><svg class="off"><use href="#elln"/></svg><b class="d off"></b><svg class="off"><use href="#recn"/></svg><b class="d off"></b><svg class="off"><use href="#pentn"/></svg><b class="d off"></b></div>

  <main class="work">
    <aside class="vbar">
      <div><svg><use href="#vectp"/></svg></div><div><svg><use href="#rasterp"/></svg></div><div><svg><use href="#meshp"/></svg></div><div><svg><use href="#commap"/></svg></div><div><svg><use href="#featherp"/></svg></div><div><svg><use href="#virtp"/></svg></div><div><svg><use href="#pgp"/></svg><b class="d"></b></div><div><svg><use href="#globep"/></svg><b class="d"></b></div><div><svg><use href="#wcsp"/></svg></div><div><svg><use href="#wfsp"/></svg><b class="d"></b></div><div><svg><use href="#vectn"/></svg><b class="d"></b></div>
    </aside>
    <section class="docks">
      <div class="dhead"><span>Browser</span><svg><use href="#fl"/></svg><svg><use href="#cl"/></svg></div>
      <div class="dtools"><svg><use href="#addsel"/></svg><svg><use href="#refresh"/></svg><svg><use href="#funnel"/></svg><svg><use href="#collapse"/></svg><svg><use href="#infoc"/></svg></div>
      <ul class="list browser">
        <li><i></i><svg><use href="#favs"/></svg>Favorites</li>
        <li><i class="r"></i><svg><use href="#homef"/></svg>Home</li>
        <li><i class="r"></i><svg><use href="#folder"/></svg>/</li>
        <li><i></i><svg><use href="#gpkg"/></svg>GeoPackage</li>
        <li><i></i><svg><use href="#feather"/></svg>SpatiaLite</li>
        <li><i></i><svg><use href="#pg"/></svg>PostGIS</li>
        <li><i></i><svg><use href="#mssql"/></svg>MSSQL</li>
        <li><i></i><svg><use href="#db2"/></svg>DB2</li>
        <li><i></i><svg><use href="#globe"/></svg>WMS/WMTS</li>
        <li><i class="o"></i><svg><use href="#globe"/></svg>XYZ Tiles</li>
        <li class="sub"><svg><use href="#raster"/></svg>Open Street Map</li>
        <li class="sub hl"><svg><use href="#raster"/></svg>OpenStreetMap</li>
        <li><i></i><svg><use href="#wcs"/></svg>WCS</li>
        <li><i></i><svg><use href="#wfs"/></svg>WFS</li>
        <li><i></i><svg><use href="#grid"/></svg>OWS</li>
        <li><i></i><svg><use href="#arcg"/></svg>ArcGisMapServer</li>
        <li><i></i><svg><use href="#arcf"/></svg>ArcGisFeatureServer</li>
        <li><i></i><svg><use href="#geon"/></svg>GeoNode</li>
      </ul>
      <div class="dhead second"><span>Layers</span><svg><use href="#fl"/></svg><svg><use href="#cl"/></svg></div>
      <div class="dtools lay"><svg class="btn on"><use href="#brush"/></svg><svg><use href="#addgrp"/></svg><svg><use href="#eye"/></svg><svg><use href="#funnel"/></svg><svg><use href="#epsf"/></svg><b class="d"></b><svg><use href="#expand"/></svg><svg><use href="#collapse"/></svg><svg><use href="#remove"/></svg></div>
      <ul class="list layers">
        <li><i></i><svg><use href="#tbl"/></svg>street_crime</li>
        <li class="cur"><i></i><svg class="c"><use href="#chk"/></svg><em></em><u>LSOA_2011_sw5forces_BG...</u></li>
      </ul>
    </section>
    <section class="canvas"><svg id="map" viewBox="275 169 938 736" width="938" height="736"></svg></section>
    <section class="styling">
      <div class="dhead"><span>Layer Styling</span><svg><use href="#fl"/></svg><svg><use href="#cl"/></svg></div>
      <div class="combo main"><svg><use href="#flag"/></svg><span>LSOA_2011_sw5forces_BGC_V2</span><b class="d"></b></div>
      <div class="sbody">
        <div class="tabs"><div class="act"><svg><use href="#brush2"/></svg></div><div class="dark"><svg><use href="#abc"/></svg><svg><use href="#cube"/></svg><svg><use href="#tree"/></svg><svg><use href="#undoredo"/></svg></div></div>
        <div class="content">
          <div class="combo single"><b class="sym"></b><span>Single symbol</span></div>
          <div class="symrow"><div class="prev"><i></i></div><div class="symtree"><p class="hl"><b class="d"></b><em></em><strong>Fill</strong></p><p class="ch"><em></em>Simple fill</p></div></div>
          <div class="props"><div><label>Unit</label><span class="combo">Millimeter</span></div><div class="op"><label>Opacity</label><span class="slider"></span></div><div><label>Color</label><span class="combo col"><i></i></span></div></div>
          <div class="search"><svg><use href="#mag"/></svg>All Symbols</div>
          <div class="gallery">
            <figure><svg><rect x="1" y="1" width="50" height="42" fill="url(#plasma)" stroke="#222" stroke-width="1.500"/></svg><figcaption>gradient<br>plasma</figcaption></figure>
            <figure><i class="gg"></i><figcaption>gradient&nbsp; gray<br>fill</figcaption></figure>
            <figure><i class="gbl"></i><figcaption>gradient blue fill</figcaption></figure>
            <figure><i class="gbr"></i><figcaption>gradient brown<br>fill</figcaption></figure>
            <figure><i class="gr"></i><figcaption>gradient red fill</figcaption></figure>
            <figure><i class="gy"></i><figcaption>gradient<br>yellow fill</figcaption></figure>
            <figure><i class="g1"></i><figcaption>gray 1 fill</figcaption></figure>
            <figure><i class="g2"></i><figcaption>gray 2 fill</figcaption></figure>
            <figure><svg><path d="M1 1h50v42H1zM1 1l5 5 5-5 5 5 5-5 5 5 5-5 5 5 5-5 5 5 5-5" fill="none" stroke="#222" stroke-width="1.500"/></svg></figure>
            <figure><svg><path d="M1 1h50v42H1zM7 1v40M14 1v40M21 1v40M28 1v40M35 1v40M42 1v40" fill="none" stroke="#222" stroke-width="1.300"/></svg></figure>
            <figure><svg><path d="M1 1h50v42H1z" fill="#fff" stroke="#222" stroke-width="1.500"/></svg></figure>
            <figure><svg><path d="M1 1h50v42H1zM4 8l7-7M13 8l7-7M22 8l7-7" fill="#eef5fb" stroke="#5a9bd0" stroke-width="1.500"/></svg></figure>
          </div>
          <div class="views"><span class="on"><svg viewBox="0 0 12 12"><path d="M0 0h12v12H0z" fill="#7ea8da"/><path d="M0 3h12M0 6h12M0 9h12M3 0v12M6 0v12M9 0v12" stroke="#dfe6ee" stroke-width="1"/></svg></span><span><svg><use href="#table"/></svg></span></div>
          <div class="lr"><i class="r"></i>Layer Rendering</div>
          <div class="hscroll"><b></b><span></span><b class="rt"></b></div>
          <div class="foot"><span class="pb"><svg><use href="#undoo"/></svg></span><span class="pb"><svg><use href="#redog"/></svg></span><div class="live"><svg><use href="#chk"/></svg>Live update</div><span class="apply"><svg viewBox="0 0 14 16"><path d="M1 9l3-1 2 2.500L11 2l2.500.500-6 12.500H5z" fill="#a3d04a" stroke="#5b8a2a" stroke-width=".8"/></svg>Apply</span></div>
        </div>
      </div>
      <div class="dtabs"><span class="t1">LSOA_2011_sw5forces_BGC_V2 :: Features To...</span><span class="t2">L...</span></div>
    </section>
  </main>
  <footer class="status">
    <div class="loc"><svg><use href="#mag"/></svg>Type to locate (Ctrl+K)</div>
    <div class="st"><span class="l1">Coordinate</span><span class="f f1">81496,98774</span><svg class="sa"><use href="#sat"/></svg><span class="l2">Scale</span><span class="f f2">1:1204303<b class="ddb"></b></span><svg class="lk"><use href="#lock"/></svg><span class="l3">Magnifier</span><span class="f f3">100%<b class="sp"></b></span><span class="l4">Rotation</span><span class="f f4">0.0 °<b class="sp"></b></span><svg class="ck"><use href="#chk"/></svg><span class="l5">Render</span><svg class="wi"><use href="#wire"/></svg><span class="l6">USER:100000</span><svg class="bb" viewBox="0 0 14 13"><path d="M7 .500a6 5 0 1 0 2 10l3 2-.5-3.500A5.500 5 0 0 0 7 .500z" fill="#555"/></svg></div>
  </footer>
</div>
<div class="edge"></div>
<svg class="arrow" width="74" height="133"><path d="M18.500 0h37v98H72L36 131 0 97h18.500z" fill="#e02839"/></svg>
<div class="callout"></div>
<script src="map.js"></script>
</body>
</html>
```

FILE: styles.css
```css
*{box-sizing:border-box}
body{margin:0;width:1557px;height:933px;overflow:hidden;background:#fff;color:#1a1a1a;font:11.7px/15px "Noto Sans","Open Sans",sans-serif;position:relative}
ul,p,figure{margin:0;padding:0;list-style:none}
svg{display:block;flex:none}
i,em{font-style:normal}
.defs{display:none}
.grads{position:absolute}
.window{margin:0 0 0 1px;width:1548px;height:931px;background:#eeeae5;border-top:2px solid #f0f1f1;display:flex;flex-direction:column;overflow:hidden}
.edge{position:absolute;left:1549px;top:0;width:8px;height:21px;background:#f0f1f1;border-bottom:1px solid #999}
.titlebar{height:23px;flex:none;background:linear-gradient(#393833,#4b4a44);color:#dfdbd2;font-weight:bold;font-size:11px;line-height:22px;text-align:center;display:flex;justify-content:center}
.titlebar span{flex:1;padding-left:48px;letter-spacing:.35px}
.wbtns{display:flex;gap:4px;padding:5px 4px 0 0}
.wbtns svg{width:12px;height:12px}
.menu{height:17px;flex:none;display:flex;gap:12.450px;padding-left:8px;line-height:16px;border-bottom:1px solid #dfdbd6;font-size:11.500px}
.menu u{text-underline-offset:2px}
.bar{height:31.500px;flex:none;display:flex;align-items:center;border-bottom:1px solid #b5b1ac;background:linear-gradient(#f7f4f0,#ece9e4);position:relative}
.bar.last{height:31px;border-bottom:2px solid #cfccc6}
.bar>svg,.snap>svg{width:26.600px;height:27px;padding:4px 3px 3px}
.bar svg.btn{border:1px solid #b9b5b0;border-radius:3px;background:#fbfaf9;padding:2px;height:25px}
.bar svg.on,.dtools svg.on{background:#dcd9d5;border-color:#aaa6a1}
svg.off{opacity:.34;filter:saturate(.45)}
.g{width:13px;height:15px;flex:none;background:linear-gradient(90deg,#c9c5c0 1px,transparent 1px 2px,#c9c5c0 2px 3px,transparent 3px) 4px 0/13px 15px no-repeat;-webkit-mask:repeating-linear-gradient(#000 0 1px,transparent 1px 3px);mask:repeating-linear-gradient(#000 0 1px,transparent 1px 3px)}
.g.narrow{width:12.500px}
.bar>.g:first-child{width:10px}
.s{width:6px;height:16px;border-left:1px solid #cfcbc6;flex:none}
.d{width:10px;height:5px;flex:none;background:#444;clip-path:polygon(0 0,80% 0,40% 90%)}
.bar .d{margin-top:1px}
.d.off{opacity:.35}
.snap{position:absolute;left:1064px;top:0;height:31px;display:flex;align-items:center}
.spin12{width:76px;height:19px;border:1px solid #c0bcb7;background:#eeebe7;color:#aaa;padding:1px 4px;border-radius:2px}
.unitbox{width:71px;height:19px;border:1px solid #c9c5c0;background:#f6f4f1;display:flex;align-items:center;justify-content:flex-end;border-radius:2px}
.work{height:738px;flex:none;display:flex}
.vbar{width:42px;flex:none;background:linear-gradient(90deg,#f6f3ee,#e9e6e1);border-right:1px solid #c2beb9;padding-top:10px}
.vbar div{height:25.900px;display:flex;align-items:center;padding-left:6px;gap:2px}
.vbar svg{width:21px;height:21px}
.docks{width:231px;flex:none;padding-right:5px;display:flex;flex-direction:column}
.dhead{height:16px;display:flex;align-items:center;gap:1px;padding:0 1px 0 3px;flex:none}
.dhead span{flex:1}
.dhead svg{width:10px;height:10px}
.dtools{height:24px;display:flex;align-items:center;gap:6.300px;padding-left:6px;flex:none}
.dtools svg{width:14px;height:14px}
.list{background:#fff;border:1px solid #b9b6b1;flex:none;overflow:hidden}
.browser{height:328px;padding-top:.500px}
.list li{height:15.330px;line-height:15.330px;display:flex;align-items:center;white-space:nowrap}
.list li i{width:18px;height:8px;flex:none}
.list li svg{width:13px;height:13px;margin-right:5px}
i.r,i.o{background:#444;clip-path:polygon(5px 0,5px 8px,10px 4px)}
i.o.o{clip-path:polygon(3px 2px,12px 2px,7.500px 6.500px)}
.list .sub{padding-left:35px}
.list .sub svg{width:12px;height:12px;margin-right:5px;margin-left:0}
.list .hl{background:#308cc6;color:#e6f1f9;width:151px}
.hl svg{opacity:.6}
.dhead.second{margin-top:4px}
.dtools.lay{height:25px;gap:5px;padding-left:3px}
.dtools.lay svg{width:14.600px}
.dtools.lay svg.btn{width:20px;height:19px;border:1px solid #aaa;border-radius:2px;padding:2px}
.dtools.lay .d{margin:0 -1px 0 -2px}
.layers{flex:1;font-weight:bold;font-size:11.500px;letter-spacing:.2px}
.layers .cur{background:#308cc6;color:#e6f1f9}
.layers .cur u{letter-spacing:.45px}
.layers li svg.c{width:11px;height:11px;margin:0 6px 0 1px}
.layers em{width:12px;height:12px;background:#35c184;border:1px solid #2a9d78;margin-right:4px}
.canvas{width:940px;height:738px;background:#fff;border:1px solid #c4c1bc;border-top:0;flex:none}
.canvas svg{margin-top:1px}
.styling{flex:1;padding:0 2px 0 7px;display:flex;flex-direction:column;min-width:0}
.styling .dhead{padding:0 0 0 1px;margin-right:-1px}
.combo{display:flex;align-items:center;border:1px solid #b7b3ae;border-radius:2px;background:linear-gradient(#fbfafa,#eeebe8);height:20px;white-space:nowrap}
.combo.main{margin:3px 1px 0 0;padding:0 1px 0 4px}
.combo.main svg{width:14px;height:12px;margin-right:1px}
.combo.main span{flex:1;letter-spacing:.25px}
.combo.main .d{width:8px}
.sbody{display:flex;height:674px;margin-top:1px;overflow:hidden}
.tabs{width:31px;flex:none;display:flex;flex-direction:column}
.act{height:29px;padding:7px 0 0 5px}
.act svg{width:19px;height:19px}
.dark{flex:1;background:#5b5b5b;display:flex;flex-direction:column;gap:7.500px;padding:4px 0 0 4px}
.dark svg{width:18.500px;height:18.500px}
.content{flex:1;padding:3px 0 0 3px;min-width:0;display:flex;flex-direction:column;overflow:hidden}
.content>*{flex:none}
.single{border-right:0;padding-left:5px;gap:3px}
.sym{width:10px;height:9px;background:linear-gradient(#168a44 0 4px,transparent 4px 5px,#1fae57 5px)}
.symrow{display:flex;height:116px;border-bottom:1px solid #a9a6a1;padding-top:9px}
.prev{width:100px;padding:24px 0 0 23px}
.prev i{display:block;width:50px;height:50px;background:#3ad66f;border:1px solid #2b4c38}
.symtree{flex:1;height:96px;background:#fff;border:1px solid #c6c3be;border-right:0}
.symtree p{display:flex;align-items:center;height:15.500px}
.symtree .hl{background:#308cc6;color:#fff;padding-left:4px}
.symtree .hl .d{background:#223;margin-right:5px}
.symtree em{width:12.500px;height:12.500px;background:#35c184;border:1px solid #2a9d78;margin-right:5px}
.symtree .ch{padding-left:35px}
.symtree .ch em{background:#3ad66f}
.props{height:124px;border-bottom:1px solid #a9a6a1;padding-top:5.500px}
.props>div{display:flex;align-items:center;height:21px}
.props .op{height:20px}
.props>div:last-child{height:23px}
.props label{width:43px;flex:none}
.props .combo{flex:1;border-right:0;padding-left:3px}
.slider{flex:1;height:5px;background:#3f9bd6;border:1px solid #3483b5;border-right:0}
.props .col{height:22px;padding-left:3px;background:#fff}
.col i{flex:1;height:13px;background:#3ad66f;border-radius:2px 0 0 2px}
.search{margin-top:4px;height:21px;background:#fff;border:1px solid #b7b3ae;border-right:0;border-radius:2px 0 0 2px;display:flex;align-items:center;padding-left:7px;gap:4.500px}
.search svg{width:11px;height:11px}
.gallery{margin-top:3px;height:215px;background:#fff;border:1px solid #b7b3ae;border-right:0;display:grid;grid-template-columns:repeat(4,81.600px);grid-auto-rows:96px;padding:16px 0 0 1.500px;overflow:hidden}
.gallery figure{display:flex;flex-direction:column;align-items:center}
.gallery i,.gallery svg{width:52px;height:44px;flex:none}
.gallery i{border:1px solid}
.gallery figcaption{margin-top:12px;font-size:9.500px;line-height:12px;text-align:center;white-space:nowrap}
.gallery .gg{background:linear-gradient(#555,#c8c8c8);border-color:#b3b34a}
.gallery .gbl{background:linear-gradient(#2c6d9f,#4aa8f3);border-color:#3b7aac}
.gallery .gbr{background:linear-gradient(#532a17,#b5592a);border-color:#b5623c}
.gallery .gr{background:linear-gradient(#b31515,#fc1c1f);border-color:#8c2a2a}
.gallery .gy{background:linear-gradient(#fff500,#ffffb5);border-color:#f3e65c}
.gallery .g1{background:#f6f6f6;border-color:#888}
.gallery .g2{background:#ccc;border-color:#888}
.views{display:flex;margin-top:5px;height:20px;margin-left:-1px}
.views span{width:20px;height:20px;padding:3px}
.views .on{border:1px solid #aaa6a1;border-radius:2px;background:#dcd9d5}
.views svg{width:12px;height:12px}
.views span+span svg{width:13px;height:13px}
.lr{display:flex;align-items:center;margin-top:17px;height:16px;font-weight:bold;font-size:11.500px}
.lr i{width:18px;height:9px;margin-left:-1px}
.hscroll{margin-top:72px;height:13px;display:flex;align-items:center;border-top:1px solid #d6d3ce}
.hscroll span{flex:1;height:12px;background:linear-gradient(#fff,#f2f0ed);border:1px solid #c6c3be;border-width:0 1px;margin:0 3px 0 4px}
.hscroll b{width:5px;height:6px;margin-left:2px;background:#444;clip-path:polygon(100% 0,100% 100%,0 50%)}
.hscroll .rt{clip-path:polygon(0 0,0 100%,100% 50%);margin:0 3px 0 2px}
.foot{display:flex;margin-top:4px;height:20px;align-items:center;margin-left:-1px}
.pb,.apply{border:1px solid #b7b3ae;border-radius:2px;background:linear-gradient(#fbfafa,#eeebe8);height:20px;width:20px;margin-right:4px;padding:3.500px}
.pb svg{width:11px;height:11px}
.live{flex:1;display:flex;justify-content:flex-end;align-items:center;gap:4px;padding-right:10px;letter-spacing:-.03px}
.live svg{width:11px;height:11px}
.apply{width:64px;margin:0 1px 0 0;display:flex;align-items:center;justify-content:center;padding:0;gap:1px}
.apply svg{width:13px;height:15px}
.dtabs{display:flex;margin:2px -2px 0 -3px;height:22px}
.dtabs span{white-space:nowrap;border:1px solid #b5b1ac;line-height:20px}
.t1{width:291px;background:#dad7d2;padding-left:14px;border-radius:2px;letter-spacing:.22px}
.t2{flex:1;background:#f3f0ec;padding-left:10px;border-color:#cfccc6!important;letter-spacing:.8px}
.status{flex:1;display:flex;align-items:center;font-size:9.800px;padding-top:2px}
.loc{width:221px;height:20px;margin-left:3px;background:#fff;border:1px solid #b7b3ae;border-radius:2px;display:flex;align-items:center;gap:5.500px;padding-left:6px;color:#777;font-size:11.800px}
.loc svg{width:11px;height:11px}
.st{margin-left:606px;width:718px;display:flex;align-items:center;white-space:nowrap}
.st>*{flex:none}
.f{height:19px;background:#fff;border:1px solid #b7b3ae;border-radius:2px;display:flex;align-items:center;justify-content:space-between;padding-left:3px}
.l1{width:52px;letter-spacing:-.1px}.f1{width:81px;padding-left:10px}.sa{width:13px;height:14px;margin:0 11px 0 3px}.l2{width:26px}.f2{width:79px;padding-left:2px}
.ddb{width:16px;height:17px;border-left:1px solid #b7b3ae;display:flex;align-items:center;justify-content:center}
.ddb::after{content:"";width:7px;height:4px;background:#555;clip-path:polygon(0 0,100% 0,50% 100%)}
.lk{width:10px;height:13px;margin:0 7px 0 8px}.l3{width:46px}.f3{width:79px}
.sp{width:11px;height:17px;border-left:1px solid #ccc;display:flex;flex-direction:column;align-items:center;justify-content:space-between;padding:3px 0}
.sp::before,.sp::after{content:"";width:6px;height:4px;background:#555;clip-path:polygon(0 100%,100% 100%,50% 0)}
.sp::after{clip-path:polygon(0 0,100% 0,50% 100%)}
.l4{margin-left:7px;width:46px}.f4{width:76px}.ck{width:11px;height:11px;margin:0 4px 0 5px}.l5{width:45px}.wi{width:15px;height:15px;margin-right:1px}.l6{width:75px;letter-spacing:-.1px}.bb{width:14px;height:13px}
.arrow{position:absolute;left:1217px;top:20px}
.callout{position:absolute;left:1210px;top:183px;width:345px;height:35px;border:5px solid #e02839;border-radius:2px}
```

FILE: map.js
```js
// Draws the area layer: a coastline filled green and divided into irregular small areas.
const COAST = `1139,233 1147,237 1147,243 1153,245 1153,253 1157,257 1166,254 1158,267 1159,274 1165,280 1160,285 1163,292 1157,294 1155,300 1157,310 1155,319 1151,326 1155,335 1154,347 1161,353 1155,354 1159,367 1155,377 1157,384 1162,384 1167,391 1173,400 1175,410 1184,420 1183,427 1176,429 1181,437 1191,445 1188,453 1183,457 1184,465 1183,476 1177,473 1170,476 1165,484 1155,486 1161,497 1162,503 1160,510 1167,513 1168,525 1166,537 1172,540 1171,553 1162,561 1150,553 1141,551 1130,547 1123,550 1113,547 1108,552 1117,560 1120,567 1125,568 1133,567 1127,575 1127,586 1136,586 1132,594 1135,603 1143,612 1157,616 1155,619 1143,624 1127,625 1113,628 1111,635 1113,648 1108,661 1092,664 1083,659 1070,654 1058,654 1047,652 1028,649 1022,652 1022,660 1017,661 1025,672 1022,678 1018,683 1019,670 1013,662 1000,650 983,638 963,627 950,623 938,620 920,629 907,628 903,633 883,634 873,638 867,647 853,654 847,652 841,635 839,636 843,657 837,662 832,673 829,688 833,695 827,697 821,700 821,711 833,713 828,723 822,731 813,735 803,743 801,762 795,763 788,766 780,762 777,764 763,755 762,745 750,737 732,739 720,732 715,725 706,720 702,727 700,733 693,722 687,719 660,719 657,725 643,728 618,729 613,722 602,727 603,733 598,737 600,745 594,756 583,752 574,762 563,760 561,775 555,776 554,763 548,762 545,773 542,787 530,789 540,789 546,800 537,814 527,813 520,827 510,819 507,800 502,792 490,786 478,783 472,777 462,778 460,790 453,797 433,801 427,792 433,785 430,773 437,764 447,762 462,753 472,753 480,758 485,755 489,746 500,747 517,735 518,725 530,720 535,702 547,697 555,688 554,675 557,662 567,665 572,658 573,665 577,651 587,652 600,650 605,642 607,629 615,623 627,615 631,607 642,602 645,587 644,563 648,548 652,532 668,536 682,543 692,540 702,528 708,521 706,505 700,499 708,497 707,485 725,483 747,482 760,477 785,474 800,478 815,482 827,477 842,483 853,492 875,493 888,488 900,486 917,485 923,479 920,475 920,465 922,455 918,453 926,447 928,435 940,433 948,420 960,407 973,403 983,390 987,380 997,365 1012,353 1016,347 1033,332 1028,327 1017,338 1012,347 993,357 986,373 982,360 984,345 983,317 989,309 997,303 1012,298 1023,293 1019,278 1014,275 1014,265 1018,258 1024,260 1028,265 1034,261 1040,259 1044,265 1047,273 1057,273 1063,267 1070,263 1069,252 1079,253 1078,262 1093,262 1107,254 1117,253 1128,263 1130,250 1123,244 1133,240`.split(' ').map(p => p.split(',').map(Number));

// Towns: x, y, radius, spacing between area centres.
const TOWNS = [
  [1001, 416, 14, 2.2], [1003, 405, 9, 2.4], [990, 407, 6, 3], [1088, 292, 8, 2.4], [1060, 306, 8, 2.8], [1066, 298, 6, 2.8],
  [1052, 312, 5, 3], [1138, 385, 10, 2.4], [715, 711, 12, 2.3], [731, 714, 5, 2.6], [829, 621, 9, 2.6],
  [1102, 616, 8, 2.7], [1117, 618, 11, 2.2], [1133, 619, 8, 2.3], [1112, 605, 12, 4], [1149, 618, 5, 2.6], [1016, 655, 5, 2.5],
  [905, 539, 7, 2.9], [987, 560, 6, 2.8], [1036, 438, 7, 2.6], [934, 443, 7, 2.7], [1136, 525, 6, 2.5], [814, 674, 7, 3.2],
  [824, 691, 6, 2.3], [817, 702, 4, 2.3], [827, 715, 3, 2.6], [848, 650, 4, 2.4], [735, 519, 5, 2.5], [1063, 457, 5, 2.8],
  [921, 508, 5, 2.8], [1060, 340, 13, 6], [1107, 345, 5, 3.2], [1077, 416, 5, 2.7], [1100, 420, 4, 2.9], [1027, 393, 4, 2.8],
  [545, 743, 8, 3.8], [506, 753, 5, 2.7], [521, 750, 5, 2.8], [602, 721, 6, 2.7], [547, 700, 4, 2.5], [458, 779, 3, 2.5],
  [612, 688, 4, 3], [543, 773, 4, 2.3], [925, 479, 4, 2.5], [1044, 481, 4, 2.7], [986, 486, 3, 2.5], [1017, 463, 7, 5],
  [1010, 400, 22, 7], [1069, 484, 5, 3.8], [965, 424, 5, 3.2], [1058, 366, 4, 3], [1151, 366, 3, 3], [1037, 350, 4, 3.2],
  [992, 320, 5, 3.4], [1015, 317, 4, 3.4], [1089, 278, 4, 2.9], [1075, 266, 4, 2.6], [1138, 250, 3, 2.7], [839, 487, 4, 2.8],
  [881, 550, 4, 3.4], [836, 571, 4, 3.4], [929, 579, 3, 2.5], [1021, 626, 3, 2.5], [960, 567, 6, 5], [709, 530, 5, 2.9], [650, 587, 4, 3.2],
  [678, 641, 4, 3], [657, 690, 4, 3], [592, 672, 3, 2.3], [620, 704, 5, 3.3], [1144, 494, 7, 5], [1103, 455, 4, 3.2], [1070, 585, 3, 2.6],
  [507, 786, 4, 3.2], [483, 760, 4, 3], [717, 505, 4, 3.2], [853, 580, 3, 2.7], [1008, 558, 3, 2.7], [1148, 427, 3, 3], [899, 615, 6, 5], [758, 620, 3, 3]
];

let seed = 77123;
const rnd = () => { seed = (seed * 1664525 + 1013904223) >>> 0; return seed / 4294967296; };

// Scattered villages, mostly in the north-east.
for (let i = 0; i < 75; i++) TOWNS.push([900 + rnd() * 250, 340 + rnd() * 270, 2 + rnd() * 1.6, 2.9]);
for (let i = 0; i < 35; i++) TOWNS.push([500 + rnd() * 400, 500 + rnd() * 260, 2 + rnd() * 1.2, 3]);

const inside = (x, y) => {
  let c = false;
  for (let i = 0, j = COAST.length - 1; i < COAST.length; j = i++) {
    const [xi, yi] = COAST[i], [xj, yj] = COAST[j];
    if ((yi > y) !== (yj > y) && x < (xj - xi) * (y - yi) / (yj - yi) + xi) c = !c;
  }
  return c;
};

const isTown = [];
let town = false;
const spacing = (x, y) => {
  let s = 9.8;
  town = false;
  if (x < 900) s = 14;
  if (x < 620) s = 9.5;
  if (x > 780 && x < 900 && y > 560) s = 10;
  if (x > 1090 && y < 600) s = 11;
  s *= 0.6;
  for (const [tx, ty, r, d] of TOWNS) {
    const q = Math.hypot(x - tx, y - ty) / r;
    if (q < 1) { s = Math.min(s, d * 0.62 * (1 + q * q * 0.8)); town = true; }
    else if (q < 1.4 && r > 3.6) s = Math.min(s, d * 1.5);
  }
  return s * (0.65 + 0.7 * rnd());
};

const B = 16, grid = new Map(), pts = [];
const key = (x, y) => Math.floor(x / B) * 1000 + Math.floor(y / B);
const near = (x, y, n) => {
  const out = [];
  for (let a = -n; a <= n; a++) for (let b = -n; b <= n; b++) {
    const g = grid.get(key(x + a * B, y + b * B));
    if (g) out.push(...g);
  }
  return out;
};
const tryAdd = (x, y) => {
  if (!inside(x, y)) return;
  const s = spacing(x, y);
  for (const i of near(x, y, 1)) if (Math.hypot(pts[i][0] - x, pts[i][1] - y) < s) return;
  const k = key(x, y);
  if (!grid.has(k)) grid.set(k, []);
  grid.get(k).push(pts.length);
  isTown.push(town);
  pts.push([x, y]);
};
for (const [tx, ty, r] of TOWNS) {
  for (let i = 0; i < r * r * 8; i++) {
    const a = rnd() * 6.283, q = Math.sqrt(rnd()) * r * 1.2;
    tryAdd(tx + Math.cos(a) * q, ty + Math.sin(a) * q);
  }
}
for (let i = 0; i < 45000; i++) tryAdd(425 + rnd() * 770, 230 + rnd() * 600);

// Breaks a straight segment into a wandering line.
const wander = (a, b, amp, out) => {
  const dx = b[0] - a[0], dy = b[1] - a[1], len = Math.hypot(dx, dy);
  if (len < 2) { out.push(b); return; }
  const t = (rnd() - 0.5) * amp, u = 0.5 + (rnd() - 0.5) * 0.2;
  const m = [a[0] + dx * u - dy * t, a[1] + dy * u + dx * t];
  wander(a, m, amp, out);
  wander(m, b, amp, out);
};
const fmt = p => p[0].toFixed(1) + ' ' + p[1].toFixed(1);

const edges = [], links = pts.map(() => []);
pts.forEach((p, i) => {
  let cell = [[-30, -30], [30, -30], [30, 30], [-30, 30]].map(([x, y]) => ({ x: p[0] + x, y: p[1] + y, n: -1 }));
  const ns = near(p[0], p[1], 2).filter(j => j !== i).map(j => [Math.hypot(pts[j][0] - p[0], pts[j][1] - p[1]), j]).sort((a, b) => a[0] - b[0]);
  for (const [dist, j] of ns) {
    if (dist > 2 * Math.max(...cell.map(v => Math.hypot(v.x - p[0], v.y - p[1])))) break;
    const q = pts[j], nx = q[0] - p[0], ny = q[1] - p[1], c = nx * (p[0] + q[0]) / 2 + ny * (p[1] + q[1]) / 2;
    const next = [];
    cell.forEach((v, k) => {
      const w = cell[(k + 1) % cell.length], dv = nx * v.x + ny * v.y - c, dw = nx * w.x + ny * w.y - c;
      const t = dv / (dv - dw), cut = { x: v.x + (w.x - v.x) * t, y: v.y + (w.y - v.y) * t };
      if (dv <= 0) {
        next.push(v);
        if (dw > 0) next.push({ ...cut, n: j });
      } else if (dw <= 0) next.push({ ...cut, n: v.n });
    });
    cell = next;
  }
  cell.forEach((v, k) => {
    if (v.n <= i) return;
    const w = cell[(k + 1) % cell.length];
    edges.push([i, v.n, [v.x, v.y], [w.x, w.y]]);
    if (Math.hypot(v.x - w.x, v.y - w.y) > 1.5) { links[i].push(v.n); links[v.n].push(i); }
  });
});

// Rural cells are merged with neighbours so that areas vary in size and shape.
const parent = pts.map((_, i) => i), size = pts.map(() => 1);
const root = i => { while (parent[i] !== i) i = parent[i]; return i; };
for (let pass = 0; pass < 3; pass++) pts.forEach((_, i) => {
  if (isTown[i] || !links[i].length) return;
  const j = links[i][Math.floor(rnd() * links[i].length)];
  if (isTown[j]) return;
  const a = root(i), b = root(j), cap = 2 + Math.floor(rnd() * rnd() * 10);
  if (a !== b && size[a] + size[b] <= cap) { parent[a] = b; size[b] += size[a]; }
});

let rural = '', urban = '';
for (const [i, j, a, b] of edges) {
  if (root(i) === root(j)) continue;
  const out = [];
  wander(a, b, 0.6, out);
  const d = 'M' + fmt(a) + 'L' + out.map(fmt).join(' ');
  if (isTown[i] && isTown[j]) urban += d; else rural += d;
}

const coast = [];
COAST.forEach((p, i) => wander(p, COAST[(i + 1) % COAST.length], 0.38, coast));
const outline = 'M' + coast.map(fmt).join('L') + 'Z';
const isles = 'M627 481l2 1 1 10-2 1-1-5zM308 817l2-1 2 1 1 3-2 1-2-2zM313 814l1-3 1 4zM320 814l3 0 2 3-3 0zM317 825l3-2 3 2-1 4-4 1-2-2zM309 835l3-1 0 2-2 1zM303 820l1-2 1 2zM326 819l2 1M299 839l2 2 1-1M308 822l1 2M304 833l2 1M315 829l2 1M321 811l1 2M904 448h1v1h-1zM563 655h1v1h-1z';
const water = 'M706 519l5-1 6-3 6 2 8 1M710 521l2 5M917 490l3-6 3-6M705 690l3 7 1 7-2 8-4 4 3 5M691 712l6 2 4-4M574 666l10 2 8 0M820 672l13-1M804 709l8 7 5 2M782 750l2 8-3 4M549 745l6 8 1 6M1023 323l4-6 5 4M1032 334l-2-9-8-2';
const bay = 'M1089 630l7-3 6 3 4-2 6 2-2 6-5-1-6 1-3-4zM706 724l5-1 4 4-5 2z';
document.getElementById('map').innerHTML =
  `<clipPath id="land"><path d="${outline}"/></clipPath>
  <path d="${outline}" fill="#3ad66f"/>
  <g clip-path="url(#land)" fill="none" stroke="#23352b"><path d="${rural}" stroke-opacity=".92" stroke-width=".9"/><path d="${urban}" stroke-width="1.200"/></g>
  <path d="${water}" fill="none" stroke="#777" stroke-width="1.600"/><path d="${water}" fill="none" stroke="#eee" stroke-width=".8"/>
  <path d="${bay}" fill="#fff" stroke="#455" stroke-width=".7"/>
  <path d="${outline}" fill="none" stroke="#2c4034" stroke-width=".9"/>
  <path d="${isles}" fill="#3ad66f" stroke="#2c4034" stroke-width=".8"/>`;
```
